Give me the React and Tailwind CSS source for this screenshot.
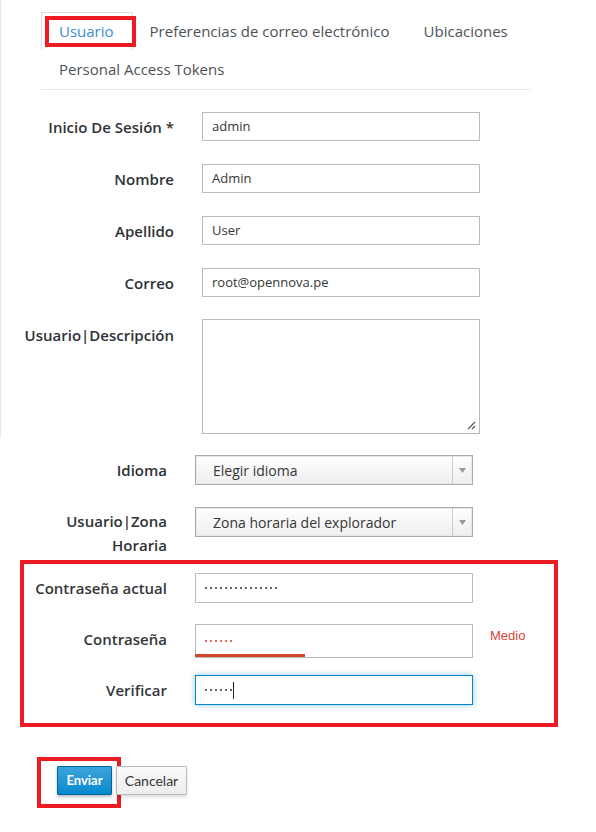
import React from "react";

const labelCls = "text-right text-[15px] text-[#2e3236] leading-[20px]";
const inputCls = "h-[29px] border border-[#bbbbbb] bg-white flex items-center px-[9px] text-[13px] text-[#363636]";

function Dots({ n, color }) {
  return (
    <div className="flex items-center gap-[3px]">
      {Array.from({ length: n }).map((_, i) => (
        <span key={i} className={`inline-block w-[2px] h-[2px] rounded-full ${color}`}></span>
      ))}
    </div>
  );
}

function Row({ label, children, top = false }) {
  return (
    <div className={`flex ${top ? "items-start" : "items-center"} gap-[28px]`}>
      <div className={`w-[173px] ${labelCls} font-semibold ${top ? "pt-[5px]" : ""}`}>{label}</div>
      {children}
    </div>
  );
}

function Select({ text }) {
  return (
    <div className="w-[278px] h-[30px] border border-[#aaaaaa] bg-gradient-to-b from-white to-[#eeeeee] flex shadow-[inset_0_0_0_1px_#e8e8e8]">
      <div className="flex-1 flex items-center pl-[17px] text-[14px] text-[#363636]">
        {text}
      </div>
      <div className="w-[20px] border-l border-[#cccccc] flex items-center justify-center">
        <svg width="7" height="5" viewBox="0 0 7 5"><path d="M0 0 L7 0 L3.5 5 Z" fill="#9a9a9a" /></svg>
      </div>
    </div>
  );
}

export default function App() {
  return (
    <div className="w-[596px] h-[832px] bg-white relative" style={{ fontFamily: '"Open Sans", sans-serif' }}>
      <div className="border-l border-[#e6e6e6] pb-[4px]">
        {/* Tabs */}
        <div className="ml-[40px] w-[490px] pt-[12px] border-b border-[#e8e8e8] text-[15px]">
          <div className="flex h-[38px] items-stretch">
            <div className="relative pl-[17px] pr-[18px] border border-b-0 border-[#dddddd] flex items-center text-[#3a8fd6]">
              Usuario
              <div className="absolute left-[3px] top-[3px] w-[91px] h-[31px] border-[4px] border-[#ed1c24]"></div>
            </div>
            <div className="px-[17px] flex items-center text-[#4d5258]">Preferencias de correo electrónico</div>
            <div className="px-[17px] flex items-center text-[#4d5258]">Ubicaciones</div>
          </div>
          <div className="flex h-[39px] items-center">
            <div className="px-[18px] text-[#4d5258]">Personal Access Tokens</div>
          </div>
        </div>

        {/* Form 1 */}
        <div className="mt-[22px] flex flex-col gap-[23px]">
          <Row label="Inicio De Sesión *">
            <div className={`${inputCls} w-[278px]`}>admin</div>
          </Row>
          <Row label="Nombre">
            <div className={`${inputCls} w-[278px]`}>Admin</div>
          </Row>
          <Row label="Apellido">
            <div className={`${inputCls} w-[278px]`}>User</div>
          </Row>
          <Row label="Correo">
            <div className={`${inputCls} w-[278px]`}>root@opennova.pe</div>
          </Row>
          <Row label="Usuario|Descripción" top>
            <div className="w-[278px] h-[115px] -mt-[1px] border border-[#bbbbbb] bg-white relative">
              <svg className="absolute right-[3px] bottom-[3px]" width="10" height="10" viewBox="0 0 10 10">
                <path d="M9 2 L2 9 M9 6 L6 9" stroke="#555" strokeWidth="1.2" />
              </svg>
            </div>
          </Row>
        </div>
      </div>

      {/* Form 2 */}
      <div className="mt-[17px] flex flex-col gap-[22px]">
        <div className="flex items-center gap-[28px]">
          <div className={`w-[167px] ${labelCls} font-semibold`}>Idioma</div>
          <Select text="Elegir idioma" />
        </div>
        <div className="flex items-start gap-[28px]">
          <div className={`w-[167px] text-right text-[15px] text-[#2e3236] leading-[24px] font-semibold pt-[2px]`}>
            Usuario|Zona<br />Horaria
          </div>
          <Select text="Zona horaria del explorador" />
        </div>
      </div>

      {/* Password box */}
      <div className="ml-[20px] mt-[3px] w-[538px] h-[167px] border-[4px] border-[#ed1c24] pt-[9px]">
        <div className="flex flex-col -ml-[24px]">
          <div className="flex items-center gap-[28px]">
            <div className={`w-[167px] ${labelCls} font-semibold text-[#33373b]`}>Contraseña actual</div>
            <div className={`${inputCls} w-[278px] h-[30px]`}>
              <Dots n={15} color="bg-[#333]" />
            </div>
          </div>
          <div className="flex items-start gap-[28px] mt-[21px]">
            <div className={`w-[167px] ${labelCls} font-semibold text-[#33373b] pt-[5px]`}>Contraseña</div>
            <div className="relative">
              <div className={`${inputCls} w-[278px] h-[34px]`}>
                <Dots n={6} color="bg-[#d7392c]" />
              </div>
              <div className="absolute left-0 bottom-[1px] w-[110px] h-[3px] bg-[#d4452c]"></div>
            </div>
            <div className="-ml-[11px] pt-[2px] text-[13px] text-[#d4453c]" style={{ fontFamily: '"Liberation Sans", Arial, sans-serif' }}>Medio</div>
          </div>
          <div className="flex items-center gap-[28px] mt-[17px]">
            <div className={`w-[167px] ${labelCls} font-semibold text-[#33373b]`}>Verificar</div>
            <div className="w-[278px] h-[30px] border border-[#0088ce] bg-white flex items-center px-[9px] shadow-[0_0_6px_rgba(0,136,206,0.45)]">
              <Dots n={6} color="bg-[#333]" />
              <span className="inline-block w-[1px] h-[17px] bg-[#222] ml-[1px]"></span>
            </div>
          </div>
        </div>
      </div>

      {/* Buttons */}
      <div className="mt-[30px] ml-[37px] flex items-start" style={{ fontFamily: 'Lato, sans-serif' }}>
        <div className="border-[4px] border-[#ed1c24] w-[84px] h-[51px] pl-[16px] pt-[5px]">
          <div className="w-[55px] h-[29px] rounded-[1px] border border-[#00659c] bg-gradient-to-b from-[#39a5dc] to-[#0088ce] text-white font-bold text-[13px] flex items-center justify-center shadow-[0_2px_3px_rgba(0,0,0,0.25)]">
            Enviar
          </div>
        </div>
        <div className="-ml-[5px] mt-[9px] w-[71px] h-[29px] rounded-[1px] border border-[#bbbbbb] bg-gradient-to-b from-[#fafafa] to-[#ededed] text-[#363636] text-[14px] flex items-center justify-center shadow-[0_2px_3px_rgba(0,0,0,0.15)]">
          Cancelar
        </div>
      </div>
    </div>
  );
}
